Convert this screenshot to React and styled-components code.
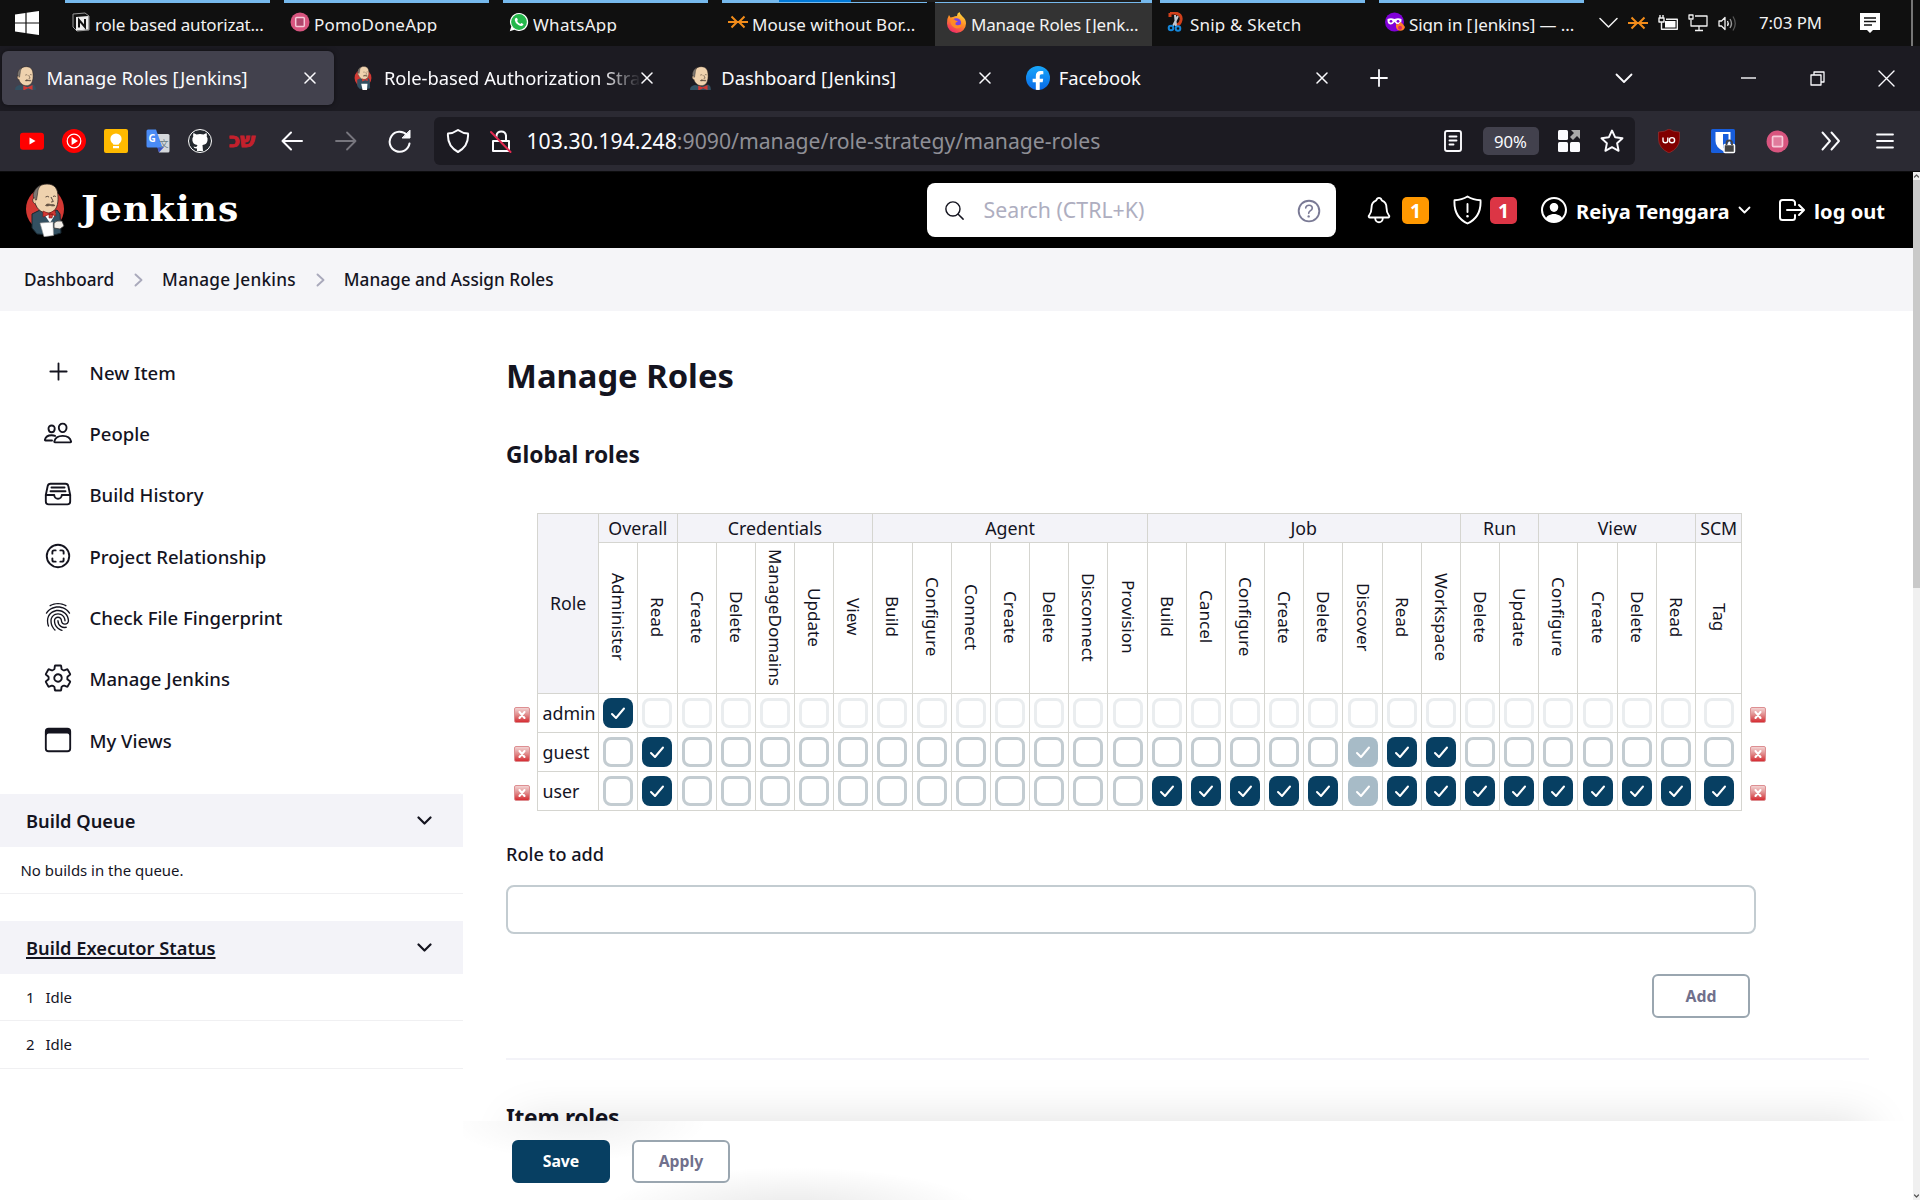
import React from 'react';
import styled, { createGlobalStyle, css } from 'styled-components';
import { FaFacebookF } from 'react-icons/fa';
import {
  IoAddOutline,
  IoPeopleOutline,
  IoFileTrayFullOutline,
  IoScanCircleOutline,
  IoFingerPrintOutline,
  IoSettingsOutline,
  IoBrowsersOutline,
  IoSearchOutline,
  IoHelpCircleOutline,
  IoNotificationsOutline,
  IoPersonCircleOutline,
  IoLogOutOutline,
} from 'react-icons/io5';

const color = {
  ink: '#14141f',
  accent: '#073f62',
  panel: '#f3f3f8',
  line: '#d5d5d0',
  field: '#c3ccd1',
};

const GlobalStyle = createGlobalStyle`
  *, *::before, *::after { box-sizing: border-box; }
  body {
    margin: 0;
    background: #fff;
    color: ${color.ink};
    font-family: "Noto Sans", "Open Sans", sans-serif;
    overflow: hidden;
  }
  svg { display: block; flex: none; }
`;

const Screen = styled.div`
  width: 1920px;
  height: 1200px;
  display: flex;
  flex-direction: column;
  overflow: hidden;
`;

/* ---------- Windows taskbar ---------- */

const Taskbar = styled.div`
  position: relative;
  height: 46px;
  flex: none;
  display: flex;
  align-items: stretch;
  background: #101010;
  color: #f2f2f2;
`;

const StartButton = styled.div`
  width: 65px;
  padding: 11px 0 0 15px;
`;

const Task = styled.div`
  width: ${(p) => (p.$active ? 217 : 205)}px;
  margin: ${(p) => (p.$active ? '0 8px 0 -6px' : '0 14px 0 0')};
  padding: 9px 0 0 ${(p) => (p.$active ? 11 : 6)}px;
  border-top: 3px solid #76b9ed;
  background: ${(p) => (p.$active ? '#333' : 'transparent')};
  display: flex;
  align-items: flex-start;
  gap: 4px;
  white-space: nowrap;
`;

const TaskLabel = styled.span`
  height: 21px;
  overflow: hidden;
  font-size: 17px;
  line-height: 25px;
  letter-spacing: ${(p) => p.$track || 0}px;
`;

const Progress = styled.div`
  position: absolute;
  top: 0;
  left: 779px;
  width: 362px;
  height: 2px;
  background: linear-gradient(90deg, #0078d7 72px, #1e1e1e 72px);
`;

const Tray = styled.div`
  display: flex;
  align-items: flex-start;
  padding-top: 13px;
  margin-left: auto;
  width: 322px;
  border-right: 7px solid #101010;
`;

const TraySlot = styled.span`
  flex: none;
  width: ${(p) => p.$w || 30}px;
  height: 20px;
  display: flex;
  align-items: center;
  justify-content: center;
`;

const Clock = styled.span`
  flex: none;
  width: 91px;
  padding-left: 21px;
  font-size: 16.8px;
  line-height: 20px;
  white-space: nowrap;
`;

const TrayEdge = styled.span`
  width: 2px;
  height: 46px;
  margin: -13px 0 0 auto;
  background: #777;
`;

/* ---------- Browser tabs ---------- */

const TabStrip = styled.div`
  height: 65px;
  flex: none;
  display: flex;
  align-items: center;
  gap: 5.4px;
  padding: 0 0 1px 2px;
  background: #1c1b22;
  color: #fbfbfe;
`;

const Tab = styled.div`
  width: 332px;
  height: 54px;
  padding: 0 18px 0 12px;
  display: flex;
  align-items: center;
  border-radius: 6px;
  ${(p) => p.$active && css`
    background: #42414d;
    box-shadow: 0 0 5px rgba(0, 0, 0, 0.5);
  `}
`;

const TabTitle = styled.span`
  flex: 1;
  min-width: 0;
  margin-left: 8.5px;
  overflow: hidden;
  white-space: nowrap;
  font-size: 18.35px;
  line-height: 28px;
  ${(p) => p.$fade && css`
    mask-image: linear-gradient(90deg, #000 85%, transparent 100%);
  `}
`;

const Slot = styled.span`
  flex: none;
  width: ${(p) => p.$w}px;
  height: ${(p) => p.$h || 30}px;
  margin-left: ${(p) => p.$ml || 0}px;
  display: flex;
  align-items: center;
  justify-content: center;
`;

const WindowControls = styled.div`
  display: flex;
  margin-left: auto;
`;

/* ---------- Browser toolbar ---------- */

const Toolbar = styled.div`
  height: 61px;
  flex: none;
  display: flex;
  align-items: center;
  padding-left: 11px;
  background: #2b2a33;
  border-bottom: 1px solid #0c0c0d;
  color: #fbfbfe;
`;

const UrlBar = styled.div`
  width: 1201px;
  height: 48px;
  margin: 0 7px;
  padding-right: 2.5px;
  display: flex;
  align-items: center;
  border-radius: 6px;
  background: #1c1b22;
`;

const Url = styled.span`
  flex: 1;
  margin-left: 7.5px;
  font-size: 21.2px;
  line-height: 30px;
  color: #8f8f96;
  b { font-weight: 400; color: #fbfbfe; }
`;

const Zoom = styled.span`
  width: 56px;
  height: 28px;
  margin: 0 8px 0 20.5px;
  border-radius: 5px;
  background: #42414d;
  font-size: 16.7px;
  line-height: 29px;
  text-align: center;
`;

/* ---------- Page ---------- */

const Viewport = styled.div`
  flex: 1;
  min-height: 0;
  display: flex;
`;

const Page = styled.div`
  width: 1913px;
  display: flex;
  flex-direction: column;
`;

const Scrollbar = styled.div`
  width: 7px;
  display: flex;
  flex-direction: column;
  justify-content: space-between;
  align-items: center;
  background: #f0f0f0;
`;

const Thumb = styled.div`
  width: 7px;
  height: 408px;
  margin-bottom: auto;
  background: #c9c9c9;
`;

const Header = styled.header`
  height: 76px;
  flex: none;
  display: flex;
  align-items: center;
  padding-left: 25px;
  background: #000;
  color: #fff;
`;

const Brand = styled.div`
  width: 902px;
  display: flex;
  align-items: center;
  gap: 16px;
`;

const Wordmark = styled.span`
  font: 700 36px/46px "DejaVu Serif", serif;
  letter-spacing: 1px;
  margin-top: -5px;
`;

const SearchBox = styled.div`
  width: 409px;
  height: 54px;
  padding: 1px 12px 0 16px;
  display: flex;
  align-items: center;
  border-radius: 8px;
  background: #fff;
  color: ${color.ink};
`;

const Placeholder = styled.span`
  flex: 1;
  margin: -2px 0 0 17.5px;
  font-size: 21.3px;
  color: #aeaec0;
`;

const Badge = styled.span`
  width: 27px;
  height: 27px;
  margin-left: 8px;
  border-radius: 5px;
  background: ${(p) => p.$bg};
  font-size: 19.5px;
  font-weight: 700;
  line-height: 27px;
  text-align: center;
`;

const HeaderLink = styled.span`
  font-size: 20.15px;
  font-weight: 700;
  line-height: 28px;
  white-space: nowrap;
  margin: 1px 0 0 ${(p) => p.$ml}px;
`;

const HeaderIcon = styled.span`
  flex: none;
  margin-left: ${(p) => p.$ml}px;
  color: ${(p) => p.$tone || 'inherit'};
`;

const Breadcrumbs = styled.nav`
  height: 63px;
  flex: none;
  display: flex;
  align-items: center;
  padding: 0 0 3px 24px;
  background: #f5f5f8;
  font-weight: 500;
  font-size: 17.2px;
  white-space: nowrap;
`;

const Crumb = styled.span`
  letter-spacing: ${(p) => p.$track || 0}px;
  margin-top: 3px;
`;

const CrumbArrow = styled.span`
  width: 48px;
  padding-left: 20px;
  margin-top: 3px;
`;

const Body = styled.div`
  flex: 1;
  min-height: 0;
  display: flex;
`;

const Sidebar = styled.aside`
  width: 463px;
  padding-top: 30px;
`;

const NavItem = styled.a`
  height: 61.35px;
  display: flex;
  align-items: center;
  padding-left: 43px;
  font-size: 18.55px;
  font-weight: 500;
`;

const NavLabel = styled.span`
  margin: 1px 0 0 16.5px;
`;

const NavIcon = styled.span`
  width: 30px;
  display: flex;
  justify-content: center;
`;

const PanelHead = styled.div`
  height: 53px;
  margin-top: ${(p) => p.$mt}px;
  padding: 0 31px 0 26px;
  display: flex;
  align-items: center;
  justify-content: space-between;
  background: ${color.panel};
  font-size: 18.3px;
  font-weight: 600;
  line-height: 30px;
`;

const PanelTitle = styled.span`
  margin-top: 1px;
  ${(p) => p.$link && css`
    text-decoration: underline;
    text-decoration-thickness: 2px;
    text-underline-offset: 2px;
  `}
`;

const PanelRow = styled.div`
  height: ${(p) => p.$h}px;
  padding-left: ${(p) => p.$pl}px;
  display: flex;
  align-items: center;
  border-bottom: 1px solid #f0f0f2;
  font-size: 14.95px;
`;

const ExecutorNumber = styled.span`
  width: 19.5px;
`;

const Main = styled.main`
  width: 1450px;
  display: flex;
  flex-direction: column;
`;

const Form = styled.div`
  position: relative;
  height: 810px;
  padding: 41px 44px 0 43px;
  overflow: hidden;
`;

const Title = styled.h1`
  margin: 0;
  font-size: 32.75px;
  font-weight: 700;
  line-height: 48px;
`;

const Subtitle = styled.h2`
  margin: ${(p) => p.$mt}px 0 0;
  font-size: 22.75px;
  font-weight: 700;
  line-height: 34px;
  letter-spacing: ${(p) => p.$track || 0}px;
`;

const RolesGrid = styled.div`
  display: grid;
  grid-template-columns: 31px 61.2px repeat(28, 39.18px) 47.3px 32px;
  grid-template-rows: 29px 151px repeat(3, 39px);
  margin-top: 41px;
  font-size: 17.8px;
`;

const RoleRow = styled.div`
  grid-column: 1 / -1;
  display: grid;
  grid-template-columns: subgrid;
`;

const cell = css`
  border-left: 1px solid ${color.line};
  border-top: 1px solid ${color.line};
  ${(p) => p.$last && css`border-right: 1px solid ${color.line};`}
  ${(p) => p.$bottom && css`
    border-bottom: 1px solid ${color.line};
    margin-bottom: -1px;
  `}
`;

const HeadCell = styled.div`
  ${cell}
  grid-row: 1 / span ${(p) => p.$rows || 1};
  grid-column: ${(p) => p.$start} / span ${(p) => p.$span || 1};
  display: flex;
  align-items: center;
  justify-content: center;
  padding-bottom: ${(p) => (p.$rows ? 2 : 0)}px;
  background: ${color.panel};
  letter-spacing: ${(p) => p.$track || 0}px;
  line-height: 24px;
`;

const PermissionCell = styled.div`
  ${cell}
  grid-row: 2;
  grid-column: ${(p) => p.$column};
  display: flex;
  align-items: center;
  justify-content: center;
  padding: 0 0 2px 0;
  writing-mode: vertical-rl;
  font-size: 17.1px;
  line-height: 24px;
  white-space: nowrap;
`;

const NameCell = styled.div`
  ${cell}
  padding-left: 4.5px;
  line-height: 38px;
`;

const BoxCell = styled.div`
  ${cell}
  display: flex;
  align-items: center;
  justify-content: center;
`;

const RemoveCell = styled.div`
  padding: 14px 0 0 8px;
`;

const Checkbox = styled.span`
  width: 30px;
  height: 30px;
  display: flex;
  align-items: center;
  justify-content: center;
  border-radius: 8px;
  border: 3px solid ${color.field};
  opacity: ${(p) => (p.$disabled ? 0.35 : 1)};
  ${(p) => p.$checked && css`
    border: none;
    background: ${color.accent};
  `}
`;

const RemoveIcon = styled.span`
  width: 16px;
  height: 16px;
  display: block;
  border-radius: 2px;
  border: 1px solid #dd8f92;
  padding: 3px;
  color: #fff;
  background: linear-gradient(#f3d3d3, #e08a8a 50%, #d62d33);
`;

const FieldLabel = styled.label`
  display: block;
  margin-top: 30.4px;
  font-size: 18.1px;
  font-weight: 500;
  line-height: 28px;
`;

const TextField = styled.div`
  width: 1250px;
  height: 49px;
  margin-top: 17px;
  border: 2px solid ${color.field};
  border-radius: 8px;
`;

const ButtonRow = styled.div`
  width: 1244px;
  margin-top: 40px;
  display: flex;
  justify-content: flex-end;
`;

const Button = styled.button`
  width: 98px;
  height: ${(p) => p.$h || 43}px;
  padding: 0 0 1px;
  border-radius: 6px;
  border: 2px solid ${(p) => (p.$primary ? color.accent : '#9aa6b0')};
  background: ${(p) => (p.$primary ? color.accent : '#fff')};
  color: ${(p) => (p.$primary ? '#fff' : '#70708c')};
  font: 700 15.8px/24px "Noto Sans", sans-serif;
`;

const Divider = styled.hr`
  margin: 40px 0 0;
  border: 0;
  height: 2px;
  background: ${color.panel};
`;

const FooterShadow = styled.div`
  position: absolute;
  left: 54px;
  right: 44px;
  bottom: -60px;
  height: 60px;
  box-shadow: 0 0 46px rgba(0, 0, 0, 0.13);
`;

const Footer = styled.footer`
  flex: 1;
  padding: 19px 0 0 49px;
  display: flex;
  align-items: flex-start;
  gap: 22px;
  background:
    radial-gradient(ellipse 130px 40px at 115px 0, rgba(0, 0, 0, 0.06), transparent),
    radial-gradient(ellipse 190px 44px at 330px 90px, rgba(0, 0, 0, 0.09), transparent),
    #fff;
`;

/* ---------- Drawings ---------- */

const Line = ({ w, h = w, d, sw = 2, stroke = 'currentColor', cap = 'round', children }) => (
  <svg width={w} height={h} viewBox={`0 0 ${w} ${h}`} fill="none" stroke={stroke} strokeWidth={sw} strokeLinecap={cap} strokeLinejoin="round">
    {d && <path d={d} />}
    {children}
  </svg>
);

const Cross = ({ size = 12, sw = 1.5 }) => <Line w={size} sw={sw} d={`M1 1L${size - 1} ${size - 1}M${size - 1} 1L1 ${size - 1}`} />;

const ButlerHead = () => (
  <>
    <path d="M9 15C8 7 14 1 22 1s11 5 11 13c.3 6-1 15-9 16S10 25 9 15z" fill="#efd2ae" stroke="#2b2320" strokeWidth=".8" />
    <path d="M10 17C6 13 9 5 16 2c-3.500 4-3 6-3.500 9-.5 2-.5 4-1 6z" fill="#7c7772" stroke="#2b2320" strokeWidth=".6" />
    <path d="M9.500 15c-3 0-2 6 1.500 6" fill="#e8c6a0" stroke="#2b2320" strokeWidth=".7" />
    <path d="M20.500 14q2-1.300 3.500 0M28 13.500q1.500-1 2.800 0M26 14l2.300 4.500-2.300.6" fill="none" stroke="#4a3a30" strokeWidth=".9" />
    <path d="M20.500 22.500c1.500-2.400 4-1.400 5-1s3-.5 4.500 1c-1.500.8-3.500.4-4.500 0s-3.500 1.200-5 0z" fill="#6b5a4a" stroke="#4a3a30" strokeWidth=".6" />
  </>
);

const Butler = () => (
  <svg width="40" height="54" viewBox="0 0 40 54">
    <ellipse cx="20" cy="26" rx="19" ry="21" fill="#d33833" />
    <path d="M7 31l8-4 8 4 9-4 3 4 1 19-7 2-17-1-5-6z" fill="#335061" stroke="#17262f" strokeWidth="1" />
    <path d="M19 31l6 9 6-10z" fill="#fff" />
    <ButlerHead />
    <path d="M18 28l6 2.500 6-3.500 1 6-6-2-7 3zM24 31l4 0-1 4h-3z" fill="#d33833" stroke="#7d1513" strokeWidth=".6" />
    <path d="M15 40l13-1 .5 13.500-9.500 1.200z" fill="#fff" stroke="#999" strokeWidth=".6" />
    <path d="M29 40q2-3 8-2l2 5-4 3-6-1z" fill="#f3efe9" stroke="#333" strokeWidth=".8" />
  </svg>
);

const ButlerBust = () => (
  <svg width="24" height="24" viewBox="0 0 44 44">
    <path d="M2 44c0-6 4-8 9-9l12 2 12-3c4 2 5 5 5 10z" fill="#335061" />
    <g transform="translate(-3 0) scale(1.15 1.2)"><ButlerHead /></g>
    <path d="M17 36l8 3 9-4v9l-8-3-9 4z" fill="#d33833" />
  </svg>
);

const ButlerSmall = () => (
  <svg width="24" height="24" viewBox="0 0 54 54"><g transform="translate(7 0)">
    <ellipse cx="20" cy="27" rx="19" ry="20" fill="#d33833" />
    <path d="M7 31l8-4 8 4 9-4 3 4 1 19-7 2-17-1-5-6z" fill="#335061" />
    <ButlerHead />
    <path d="M18 28l6 3 6-4 1 7-6-2-7 3z" fill="#d33833" />
    <path d="M16 40h14l-1 14H19z" fill="#fff" />
  </g></svg>
);

const WindowsLogo = () => (
  <svg width="24" height="24" viewBox="0 0 24 24" fill="#fff">
    <path d="M0 3.400L10.400 2v9.400H0zM11.600 1.800L24 0v11.400H11.600zM0 12.600h10.400V22L0 20.600zM11.600 12.600H24V24l-12.400-1.800z" />
  </svg>
);

const NotionIcon = () => (
  <svg width="20" height="20" viewBox="0 0 20 20">
    <path d="M2 2l12-1 4 3v14l-12 1-4-4z" fill="#111" stroke="#999" />
    <path d="M5 5l12.500-1v13.500L5 18.500z" fill="#eee" />
    <path d="M8 15.500V8l6 7V7" fill="none" stroke="#111" strokeWidth="2" />
  </svg>
);

const PomoIcon = ({ size = 20, inner = '#b0466c', ring = '#f6c9d8' }) => (
  <svg width={size} height={size} viewBox="0 0 20 20">
    <circle cx="10" cy="10" r="9.500" fill="#d8557f" />
    <rect x="5.700" y="5.500" width="8.600" height="9" rx="1" fill={inner} stroke={ring} strokeWidth="1.500" />
  </svg>
);

const WhatsIcon = () => (
  <svg width="20" height="20" viewBox="0 0 20 20">
    <path d="M10 1a9 9 0 1 1-4.500 16.700L.8 19.200 2.300 14.600A9 9 0 0 1 10 1z" fill="#fff" />
    <circle cx="10" cy="10" r="7.900" fill="#25b84c" />
    <path d="M6.500 6.200q1.200-1 1.800.2l.6 1.500-.8 1.200q1 2 3.100 2.900l1.200-1.100 1.900 1q.4.700-.7 1.700-1.400 1-4.200-.6-3.300-2.100-3.600-4.800-.1-1.300.7-2z" fill="#fff" />
  </svg>
);

const ArrowsIcon = () => (
  <Line w={20} sw={2} stroke="#f28c1a" cap="butt" d="M0 10h20M3.500 4.500L9 10l-5.500 5.500M16.500 4.500L11 10l5.500 5.500" />
);

const FirefoxIcon = () => (
  <svg width="21" height="21" viewBox="0 0 21 21">
    <defs><linearGradient id="ff" x1=".8" y1="0" x2=".3" y2="1"><stop offset="0" stopColor="#ffe141" /><stop offset=".5" stopColor="#ff8a25" /><stop offset="1" stopColor="#f0246c" /></linearGradient></defs>
    <path d="M3 3l1.500 2.500L7 5q2-1 4-1Q11 1 13.500 0q.5 2.500 3 4.500Q20 7 20 11.500a9.500 9.500 0 0 1-19 0Q1 6 3 3z" fill="url(#ff)" />
    <circle cx="10.300" cy="11" r="4.800" fill="#7542e5" />
    <path d="M4 8q3-2 5.500.5l2.500.7-2.300 1.600q-1 2.700 2.300 2.500 3 0 4-2.300 0 5-5 5.500-6-.5-7-8.500z" fill="#ff8a25" />
  </svg>
);

const SnipIcon = () => (
  <svg width="20" height="20" viewBox="0 0 20 20" fill="none">
    <path d="M4 1h5q7 1 6 7-1 5-5 5M4 1v4" stroke="#d1401b" strokeWidth="3" />
    <path d="M9 3l1 11M12 4L7 14" stroke="#bfc8d2" strokeWidth="2" />
    <circle cx="5" cy="16" r="2.300" stroke="#1687d9" strokeWidth="2" />
    <circle cx="12" cy="16.500" r="2.300" stroke="#1687d9" strokeWidth="2" />
  </svg>
);

const PrivateIcon = () => (
  <svg width="20" height="20" viewBox="0 0 20 20">
    <circle cx="9.500" cy="10" r="9.500" fill="#8000d7" />
    <path d="M2.500 7q3.500-1.500 7 0 3.500-1.500 7 0 .5 5-3 5.500-2 0-4-2.500-2 2.500-4 2.500Q2 12 2.500 7z" fill="#fff" />
    <circle cx="6" cy="9.300" r="1.400" fill="#8000d7" /><circle cx="13" cy="9.300" r="1.400" fill="#8000d7" />
    <path d="M11 12l2 .5L15.500 10q3 2 4.500 5a4.600 4.600 0 0 1-9 0z" fill="#ff7b2b" /><circle cx="15" cy="15.800" r="2" fill="#e0246c" />
  </svg>
);

const YouTube = () => (
  <svg width="24" height="24" viewBox="0 0 24 24"><rect y="3.700" width="24" height="17" rx="3" fill="#f00" /><path d="M9.500 8.500v7l6-3.500z" fill="#fff" /></svg>
);
const YouTubeMusic = () => (
  <svg width="24" height="24" viewBox="0 0 24 24"><circle cx="12" cy="12" r="12" fill="#f00" /><circle cx="12" cy="12" r="6.800" fill="none" stroke="#fff" strokeWidth="1.200" /><path d="M9.600 8v8l6.400-4z" fill="#fff" /></svg>
);
const Keep = () => (
  <svg width="24" height="24" viewBox="0 0 24 24"><rect width="24" height="24" rx="2" fill="#ffba00" /><circle cx="12" cy="10" r="5.600" fill="#fff" /><path d="M9 14h6v1.500H9zM9 17h6v2.200H9z" fill="#fff" /></svg>
);

const TranslateBox = styled.span`
  position: relative;
  width: 24px;
  height: 24px;
`;
const TranslateLetter = styled.span`
  position: absolute;
  left: ${(p) => p.$x}px;
  top: ${(p) => p.$y}px;
  color: ${(p) => p.$c};
  font: ${(p) => p.$f};
`;
const Translate = () => (
  <TranslateBox>
    <svg width="24" height="24" viewBox="0 0 24 24">
      <path d="M9 5h13q1.500 0 1.500 1.500V22q0 1.500-1.500 1.500H13z" fill="#d5d8dc" />
      <path d="M13 23.500L11 18h7z" fill="#3a53c5" />
      <path d="M2 .5h8l6.500 18H2Q.5 18.500.5 17V2Q.5.500 2 .500z" fill="#4a8bf5" />
    </svg>
    <TranslateLetter $x={2.5} $y={3} $c="#fff" $f='700 10px/12px "Noto Sans", sans-serif'>G</TranslateLetter>
    <TranslateLetter $x={13.5} $y={9} $c="#6b7d86" $f='9px/11px "Noto Sans CJK SC", sans-serif'>文</TranslateLetter>
  </TranslateBox>
);

const GithubBox = styled.span`
  width: 24px;
  height: 24px;
  display: flex;
  align-items: center;
  justify-content: center;
  border-radius: 50%;
  border: 1.5px solid #fff;
  background: #24292f;
  color: #fff;
  overflow: hidden;
`;
const GithubMark = () => (
  <GithubBox>
    <svg width="18" height="20" viewBox="0 0 18 20" fill="#fff"><path d="M2.500 2l3 1.500q3.500-.8 7 0l3-1.500q.8 2 .2 3.500Q17 7 16.500 9.500q-.5 4-5 4.500l.5 6H6v-2.500q-3 .5-3.500-2 2 .8 3.500 0l.4-1.500q-4.500-.5-5-4.500Q1 7 2.300 5.500 1.700 4 2.500 2z" /></svg>
  </GithubBox>
);

const HebrewMark = styled.span`
  color: #c4202c;
  font: 700 20px/20px "DejaVu Sans", sans-serif;
  -webkit-text-stroke: 0.9px #c4202c;
  margin-top: -3px;
`;

const FacebookBox = styled.span`
  flex: none;
  width: 24px;
  height: 24px;
  display: flex;
  justify-content: center;
  align-items: flex-end;
  border-radius: 50%;
  background: linear-gradient(#18a8fb, #0868e6);
  overflow: hidden;
  svg { margin-bottom: -1px; }
`;

const Ublock = () => (
  <svg width="24" height="24" viewBox="0 0 24 24"><path d="M12 0q4 3 10.500 3v7q0 9-10.500 14Q1.500 19 1.500 10V3Q8 3 12 0z" fill="#800000" stroke="#a33" strokeWidth=".6" /><path d="M6 8.500v3q0 2.200 2.400 2.200t2.400-2.200v-3" fill="none" stroke="#fff" strokeWidth="1.400" /><circle cx="15" cy="11.200" r="2.600" fill="none" stroke="#fff" strokeWidth="1.400" /></svg>
);
const Bitwarden = () => (
  <svg width="25" height="25" viewBox="0 0 25 25"><rect width="24" height="24" rx="1.500" fill="#175ddc" /><path d="M4.500 3h15v9q0 6-7.500 10Q4.500 18 4.500 12z" fill="#fff" /><path d="M12 5h5.500v7q0 4-5.500 7.500z" fill="#175ddc" /><rect x="13" y="15.500" width="10.500" height="8" rx="1" fill="#444" stroke="#fff" strokeWidth="1.500" /><path d="M15.500 16v-2q0-2.500 2.800-2.500T21 14v2" fill="none" stroke="#444" strokeWidth="1.800" /></svg>
);

const ShieldAlert = () => (
  <Line w={29} h={30} sw={1.9} d="M14.500 1.500Q20 5 27.500 5.200 28.500 22 14.500 28.500 .5 22 1.500 5.200 9 5 14.500 1.500zM14.500 9v8">
    <circle cx="14.500" cy="21.300" r=".7" fill="currentColor" strokeWidth="1.200" />
  </Line>
);

const Chevron = ({ w = 14, sw = 2.2 }) => <Line w={w} h={w / 2 + 2} sw={sw} d={`M1.500 1.500L${w / 2} ${w / 2}L${w - 1.5} 1.500`} />;

const Tick = () => <Line w={16} h={14} sw={2} stroke="#fff" d="M2 8L6 12L14 2.500" />;

/* ---------- Data ---------- */

const tasks = [
  { label: 'role based autorizat...', icon: <NotionIcon />, track: -0.2 },
  { label: 'PomoDoneApp', icon: <PomoIcon />, track: 0.2 },
  { label: 'WhatsApp', icon: <WhatsIcon />, track: 0.3 },
  { label: 'Mouse without Bor...', icon: <ArrowsIcon />, track: 0 },
  { label: 'Manage Roles [Jenk...', icon: <FirefoxIcon />, track: -0.2, active: true },
  { label: 'Snip & Sketch', icon: <SnipIcon />, track: 0.2 },
  { label: 'Sign in [Jenkins] — ...', icon: <PrivateIcon />, track: -0.1 },
];

const tabs = [
  { title: 'Manage Roles [Jenkins]', icon: <ButlerBust />, active: true },
  { title: 'Role-based Authorization Strategy', icon: <ButlerSmall />, fade: true },
  { title: 'Dashboard [Jenkins]', icon: <ButlerBust /> },
  { title: 'Facebook', icon: <FacebookBox><FaFacebookF size={20} color="#fff" /></FacebookBox> },
];

const navItems = [
  ['New Item', IoAddOutline, 29],
  ['People', IoPeopleOutline, 30],
  ['Build History', IoFileTrayFullOutline, 30],
  ['Project Relationship', IoScanCircleOutline, 30],
  ['Check File Fingerprint', IoFingerPrintOutline, 30],
  ['Manage Jenkins', IoSettingsOutline, 30],
  ['My Views', IoBrowsersOutline, 30],
];

const groups = [
  ['Overall', ['Administer', 'Read']],
  ['Credentials', ['Create', 'Delete', 'ManageDomains', 'Update', 'View']],
  ['Agent', ['Build', 'Configure', 'Connect', 'Create', 'Delete', 'Disconnect', 'Provision']],
  ['Job', ['Build', 'Cancel', 'Configure', 'Create', 'Delete', 'Discover', 'Read', 'Workspace']],
  ['Run', ['Delete', 'Update']],
  ['View', ['Configure', 'Create', 'Delete', 'Read']],
  ['SCM', ['Tag']],
];
const permissions = groups.flatMap(([, names]) => names);
const COUNT = permissions.length;

const roles = [
  { name: 'admin', checked: [0], disabled: permissions.map((_, i) => i).slice(1) },
  { name: 'guest', checked: [1, 19, 20, 21], disabled: [19] },
  { name: 'user', checked: [1, ...permissions.map((_, i) => i).slice(14)], disabled: [19] },
];

const groupStarts = groups.map((_, i) => 3 + groups.slice(0, i).reduce((n, g) => n + g[1].length, 0));

/* ---------- Sections ---------- */

const Remove = () => (
  <RemoveCell><RemoveIcon><Line w={8} sw={2} d="M1.500 1L6.500 7M6.500 1L1.500 7" /></RemoveIcon></RemoveCell>
);

const RoleMatrix = () => (
  <RolesGrid>
    <HeadCell $start={2} $rows={2}>Role</HeadCell>
    {groups.map(([name, names], i) => (
      <HeadCell key={name} $start={groupStarts[i]} $span={names.length} $last={i === groups.length - 1} $track={name === 'SCM' ? -0.1 : 0}>{name}</HeadCell>
    ))}
    {permissions.map((name, i) => (
      <PermissionCell key={i} $column={i + 3} $last={i === COUNT - 1}>{name}</PermissionCell>
    ))}
    {roles.map((role, r) => {
      const bottom = r === roles.length - 1;
      return (
        <RoleRow key={role.name}>
          <Remove />
          <NameCell $bottom={bottom}>{role.name}</NameCell>
          {permissions.map((_, i) => {
            const checked = role.checked.includes(i);
            return (
              <BoxCell key={i} $last={i === COUNT - 1} $bottom={bottom}>
                <Checkbox $checked={checked} $disabled={role.disabled.includes(i)}>{checked && <Tick />}</Checkbox>
              </BoxCell>
            );
          })}
          <Remove />
        </RoleRow>
      );
    })}
  </RolesGrid>
);

const TaskbarSection = () => (
  <Taskbar>
    <StartButton><WindowsLogo /></StartButton>
    {tasks.map((t) => (
      <Task key={t.label} $active={t.active}>{t.icon}<TaskLabel $track={t.track}>{t.label}</TaskLabel></Task>
    ))}
    <Progress />
    <Tray>
      <TraySlot $w={20}><Line w={19} h={12} sw={1.5} d="M1 1.500L9.500 10L18 1.500" /></TraySlot>
      <TraySlot $w={40}><ArrowsIcon /></TraySlot>
      <TraySlot $w={20}>
        <Line w={20} h={16} sw={1.4} cap="butt" d="M1 3h5v4H1zM2 0v3M5 0v3M3.500 7v7.300h15.800V4.200H8"><rect x="7" y="6" width="10.500" height="6.500" fill="#fff" stroke="none" /></Line>
      </TraySlot>
      <TraySlot $w={40}><Line w={20} h={18} sw={1.3} cap="butt" d="M7 2h12v10H3V6M1 1h4v4H1zM11 12v4M7 16.500h8" /></TraySlot>
      <TraySlot $w={20}>
        <Line w={20} h={17} sw={1.3} cap="butt" d="M1 6h2.500L7 2.500v12L3.500 11H1zM9.500 6q1.500 2.500 0 5"><path d="M12 4q3 4.500 0 9" stroke="#999" /><path d="M15 1.500q4.500 7 0 14" stroke="#555" /></Line>
      </TraySlot>
      <Clock>7:03 PM</Clock>
      <TraySlot $w={82}>
        <svg width="20" height="20" viewBox="0 0 20 20"><path d="M0 0h20v17h-7l-3 3-3-3H0z" fill="#fff" /><path d="M4 5h12M4 8.500h12M4 12h8" stroke="#111" strokeWidth="1.400" /></svg>
      </TraySlot>
      <TrayEdge />
    </Tray>
  </Taskbar>
);

const TabSection = () => (
  <TabStrip>
    {tabs.map((t) => (
      <Tab key={t.title} $active={t.active}>
        {t.icon}
        <TabTitle $fade={t.fade}>{t.title}</TabTitle>
        <Cross />
      </Tab>
    ))}
    <Slot $w={54}><Line w={18} sw={1.8} d="M9 1v16M1 9h16" /></Slot>
    <WindowControls>
      <Slot $w={60}><Line w={18} h={11} sw={1.8} d="M1.500 1.500L9 9L16.500 1.500" /></Slot>
      <Slot $w={69} $ml={60}><Line w={15} h={2} sw={1.4} cap="butt" d="M0 1h15" /></Slot>
      <Slot $w={69}><Line w={15} sw={1.3} cap="butt" d="M1 4h10v10H1zM4 4V1h10v10h-3" /></Slot>
      <Slot $w={68}><Cross size={17} sw={1.4} /></Slot>
    </WindowControls>
  </TabStrip>
);

const ToolbarSection = () => (
  <Toolbar>
    <Slot $w={42}><YouTube /></Slot>
    <Slot $w={42}><YouTubeMusic /></Slot>
    <Slot $w={42}><Keep /></Slot>
    <Slot $w={42}><Translate /></Slot>
    <Slot $w={42}><GithubMark /></Slot>
    <Slot $w={42}><HebrewMark>שכ</HebrewMark></Slot>
    <Slot $w={54} $ml={2}><Line w={22} h={20} sw={2} d="M21 10H1.500M10 1.500L1.500 10L10 18.500" /></Slot>
    <Slot $w={54}><Line w={22} h={20} sw={1.8} stroke="#77767e" d="M1 10H20.500M12 1.500L20.500 10L12 18.500" /></Slot>
    <Slot $w={54}>
      <Line w={24} h={24} sw={2} d="M21.500 14.500A10 10 0 1 1 19 6"><path d="M22 1.500V9h-7.500z" fill="currentColor" strokeWidth="1" /></Line>
    </Slot>
    <UrlBar>
      <Slot $w={48}><Line w={24} h={24} sw={2} d="M12 1Q17 4.500 22 4.500 23 17 12 23 1 17 2 4.500 7 4.500 12 1z" /></Slot>
      <Slot $w={37}>
        <Line w={22} h={24} sw={2} d="M3 12h16v10H3zM6.500 8V6.500a4.800 4.800 0 0 1 9.500 0V12"><path d="M1 3L20.500 23" stroke="#e22850" /></Line>
      </Slot>
      <Url><b>103.30.194.248</b>:9090/manage/role-strategy/manage-roles</Url>
      <Line w={18} h={22} sw={1.9} d="M3 1h12q2 0 2 2v16q0 2-2 2H3q-2 0-2-2V3q0-2 2-2zM5.500 6.500h7M5.500 10.500h7M5.500 14.500h4" />
      <Zoom>90%</Zoom>
      <Slot $w={44}>
        <svg width="22" height="22" viewBox="0 0 22 22" fill="#fbfbfe"><rect width="10" height="10" rx="1.500" /><rect y="12" width="10" height="10" rx="1.500" /><rect x="12" y="12" width="10" height="10" rx="1.500" /><path d="M13 0h9v9l-3-3-4 4-3-3 4-4z" fill="#aaa" /></svg>
      </Slot>
      <Slot $w={42}><Line w={24} h={24} sw={1.9} d="M12 1.500L15.200 8.300 22.500 9.200 17.100 14.300 18.600 21.800 12 18.100 5.400 21.800 6.900 14.300 1.500 9.200 8.800 8.300z" /></Slot>
    </UrlBar>
    <Slot $w={54}><Ublock /></Slot>
    <Slot $w={54}><Bitwarden /></Slot>
    <Slot $w={54}><PomoIcon size={23} inner="#e07b9c" /></Slot>
    <Slot $w={54}><Line w={20} h={20} sw={1.9} d="M1.500 1.500L9 10L1.500 18.500M10.500 1.500L18 10L10.500 18.500" /></Slot>
    <Slot $w={54}><Line w={18} h={16} sw={1.8} d="M1 1.500h16M1 8h16M1 14.500h16" /></Slot>
  </Toolbar>
);

const HeaderSection = () => (
  <Header>
    <Brand><Butler /><Wordmark>Jenkins</Wordmark></Brand>
    <SearchBox>
      <IoSearchOutline size={23} />
      <Placeholder>Search (CTRL+K)</Placeholder>
      <HeaderIcon $tone="#7a7a95"><IoHelpCircleOutline size={30} /></HeaderIcon>
    </SearchBox>
    <HeaderIcon $ml={28}><IoNotificationsOutline size={30} /></HeaderIcon>
    <Badge $bg="#ff9800">1</Badge>
    <HeaderIcon $ml={24}><ShieldAlert /></HeaderIcon>
    <Badge $bg="#dc3545">1</Badge>
    <HeaderIcon $ml={21}><IoPersonCircleOutline size={32} /></HeaderIcon>
    <HeaderLink $ml={6}>Reiya Tenggara</HeaderLink>
    <HeaderIcon $ml={8.5}><Chevron w={13} sw={1.8} /></HeaderIcon>
    <HeaderIcon $ml={25}><IoLogOutOutline size={32} /></HeaderIcon>
    <HeaderLink $ml={6}>log out</HeaderLink>
  </Header>
);

const Separator = () => <CrumbArrow><Line w={9} h={14} sw={1.9} stroke="#a9a9bb" d="M1.500 1.500L7.500 7L1.500 12.500" /></CrumbArrow>;

const SidebarSection = () => (
  <Sidebar>
    {navItems.map(([label, Icon, size]) => (
      <NavItem key={label}>
        <NavIcon><Icon size={size} /></NavIcon>
        <NavLabel>{label}</NavLabel>
      </NavItem>
    ))}
    <PanelHead $mt={23.5}><PanelTitle>Build Queue</PanelTitle><Chevron w={15} /></PanelHead>
    <PanelRow $h={47} $pl={20.5}>No builds in the queue.</PanelRow>
    <PanelHead $mt={27}><PanelTitle $link>Build Executor Status</PanelTitle><Chevron w={15} /></PanelHead>
    <PanelRow $h={47} $pl={26}><ExecutorNumber>1</ExecutorNumber>Idle</PanelRow>
    <PanelRow $h={48} $pl={26}><ExecutorNumber>2</ExecutorNumber>Idle</PanelRow>
  </Sidebar>
);

export default function App() {
  return (
    <>
      <GlobalStyle />
      <Screen>
        <TaskbarSection />
        <TabSection />
        <ToolbarSection />
        <Viewport>
          <Page>
            <HeaderSection />
            <Breadcrumbs>
              <Crumb>Dashboard</Crumb>
              <Separator />
              <Crumb $track={0.25}>Manage Jenkins</Crumb>
              <Separator />
              <Crumb>Manage and Assign Roles</Crumb>
            </Breadcrumbs>
            <Body>
              <SidebarSection />
              <Main>
                <Form>
                  <Title>Manage Roles</Title>
                  <Subtitle $mt={38}>Global roles</Subtitle>
                  <RoleMatrix />
                  <FieldLabel>Role to add</FieldLabel>
                  <TextField />
                  <ButtonRow><Button $h={44}>Add</Button></ButtonRow>
                  <Divider />
                  <Subtitle $mt={41} $track={-0.3}>Item roles</Subtitle>
                  <FooterShadow />
                </Form>
                <Footer>
                  <Button $primary>Save</Button>
                  <Button>Apply</Button>
                </Footer>
              </Main>
            </Body>
          </Page>
          <Scrollbar>
            <Line w={7} h={8} sw={1.2} stroke="#555" d="M1.500 5L3.500 3L5.500 5" />
            <Thumb />
            <Line w={7} h={8} sw={1.2} stroke="#555" d="M1.500 3L3.500 5L5.500 3" />
          </Scrollbar>
        </Viewport>
      </Screen>
    </>
  );
}
